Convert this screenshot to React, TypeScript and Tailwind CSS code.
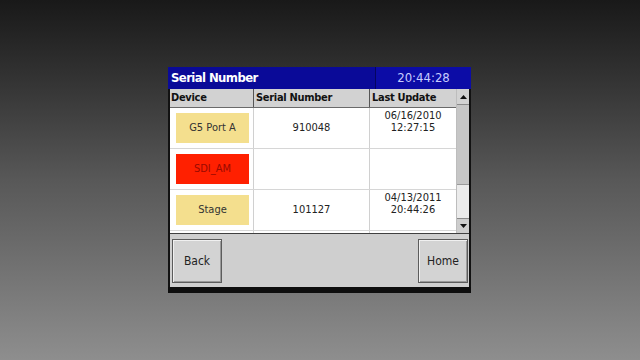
import React from "react";

const font = { fontFamily: '"DejaVu Sans Condensed", "DejaVu Sans", sans-serif' };

function DevBtn({ label, red }: { label: string; red?: boolean }) {
  return (
    <div
      className={
        "w-[73px] h-[30px] flex items-center justify-center text-[11px] " +
        (red ? "bg-[#ff2000] text-[#9a0a00]" : "bg-[#f4df8e] text-[#333]")
      }
    >
      {label}
    </div>
  );
}

function Row({ dev, red, serial, d1, d2 }: { dev: string; red?: boolean; serial: string; d1: string; d2: string }) {
  return (
    <div className="flex h-[41px] border-b border-[#d6d6d6] shrink-0">
      <div className="w-[84px] border-r border-[#d0d0d0] flex items-center pl-[6px]">
        <DevBtn label={dev} red={red} />
      </div>
      <div className="w-[116px] border-r border-[#d0d0d0] flex items-center justify-center text-[11px] text-[#222]">
        {serial}
      </div>
      <div className="w-[86px] flex flex-col items-center pt-[2px] text-[11px] leading-[12px] text-[#222]">
        <span>{d1}</span>
        <span>{d2}</span>
      </div>
    </div>
  );
}

function Btn({ label }: { label: string }) {
  return (
    <div className="w-[50px] h-[44px] border border-[#5c5c5c] bg-[#d3d3d3] flex items-center justify-center text-[12px] text-[#222] shadow-[inset_1px_1px_0_#f0f0f0,inset_-1px_-1px_0_#9a9a9a]">
      {label}
    </div>
  );
}

export default function App() {
  return (
    <div
      className="w-[640px] h-[360px] bg-gradient-to-b from-[#191919] via-[#585858] to-[#8e8e8e] pt-[67px] pl-[168px]"
      style={font}
    >
      <div className="w-[303px] flex flex-col">
        {/* title */}
        <div className="h-[22px] bg-[#0a0a98] flex">
          <div className="w-[208px] border-r border-[#050560] pl-[3px] flex items-center text-white font-bold text-[13px] tracking-[-0.6px]">
            Serial Number
          </div>
          <div className="flex-1 bg-[#0c0ca6] flex items-center justify-center text-[#c8ccff] text-[13px]">
            20:44:28
          </div>
        </div>
        {/* body */}
        <div className="border-x-2 border-[#121212] bg-[#cfcfcf]">
          <div className="flex h-[145px] border-b border-[#404040] overflow-hidden">
            <div className="w-[286px] flex flex-col bg-white">
              <div className="flex h-[19px] shrink-0 bg-[#d2d2d2] border-b border-[#6a6a6a] text-[11px] font-bold text-[#111] tracking-[-0.3px]">
                <div className="w-[84px] border-r border-[#555] pl-[1px] pt-[1px] flex items-center">Device</div>
                <div className="w-[116px] border-r border-[#555] pl-[2px] pt-[1px] flex items-center">Serial Number</div>
                <div className="w-[86px] pl-[2px] pt-[1px] flex items-center">Last Update</div>
              </div>
              <Row dev="G5 Port A" serial="910048" d1="06/16/2010" d2="12:27:15" />
              <Row dev="SDI_AM" red serial="" d1="" d2="" />
              <Row dev="Stage" serial="101127" d1="04/13/2011" d2="20:44:26" />
              <div className="flex flex-1">
                <div className="w-[84px] border-r border-[#d0d0d0]" />
                <div className="w-[116px] border-r border-[#d0d0d0]" />
              </div>
            </div>
            {/* scrollbar */}
            <div className="w-[13px] flex flex-col bg-[#e6e6e6] border-l border-[#bdbdbd]">
              <div className="h-[16px] bg-[#d2d2d2] border-b border-[#8a8a8a] flex items-center justify-center shrink-0">
                <svg width="7" height="4" viewBox="0 0 7 4"><path d="M0 4 L3.5 0 L7 4Z" fill="#111" /></svg>
              </div>
              <div className="h-[80px] bg-[#c6c6c6] border-b border-[#9a9a9a] shrink-0" />
              <div className="flex-1 bg-[#ebebeb]" />
              <div className="h-[15px] bg-[#cdcdcd] border-t border-[#8a8a8a] flex items-center justify-center shrink-0">
                <svg width="7" height="4" viewBox="0 0 7 4"><path d="M0 0 L3.5 4 L7 0Z" fill="#111" /></svg>
              </div>
            </div>
          </div>
          <div className="h-[53px] flex justify-between items-start pt-[5px] pl-[2px] pr-[1px]">
            <Btn label="Back" />
            <Btn label="Home" />
          </div>
        </div>
        <div className="h-[6px] bg-[#0e0e0e]" />
      </div>
    </div>
  );
}
